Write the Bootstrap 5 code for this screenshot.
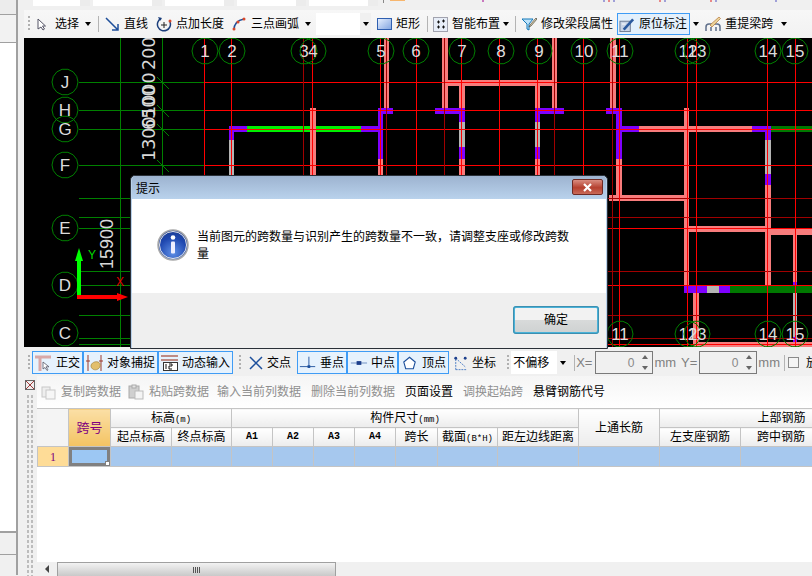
<!DOCTYPE html>
<html lang="zh-CN">
<head>
    <meta charset="UTF-8">
    <title>原位标注</title>
    <link href="https://cdn.jsdelivr.net/npm/bootstrap@5.3.3/dist/css/bootstrap.min.css" rel="stylesheet">
    <style>
        html, body { width: 812px; height: 576px; overflow: hidden; margin: 0; }
        body {
            background: #f0f0f0; color: #000;
            font-family: "Liberation Sans", "Noto Sans CJK SC", sans-serif;
            font-size: 12px; line-height: 1;
        }
        svg { display: block; flex: none; }
        .app-shell { width: 812px; height: 576px; position: relative; }
        .main-col { min-width: 0; }

        /* spacing steps the toolbars need, Bootstrap's scale is too coarse here */
        .gl-1 { margin-left: 1px; } .gl-2 { margin-left: 2px; } .gl-3 { margin-left: 3px; } .gl-4 { margin-left: 4px; }
        .gl-5 { margin-left: 5px; } .gl-6 { margin-left: 6px; } .gl-7 { margin-left: 7px; }
        .gl-8 { margin-left: 8px; } .gl-10 { margin-left: 10px; }

        /* left rail */
        .rail { width: 24px; flex: none; }
        .rail-box { width: 18px; border-right: 2px solid #a0a0a0; }
        .rail-a { height: 15px; background: #ececec; border-bottom: 1px solid #a0a0a0; }
        .rail-b { height: 28px; background: #f2f2f2; border-bottom: 1px solid #a0a0a0; }
        .rail-c { height: 490px; background: #fff; border-bottom: 2px solid #a0a0a0; }
        .rail-d { height: 22px; background: #f0f0f0; border-bottom: 1px solid #a0a0a0; }
        .rail-e { height: 20px; background: #f0f0f0; }

        /* top strip */
        .top-strip { height: 6px; padding-left: 9px; position: relative; }
        .strip-input { width: 69px; height: 6px; margin-right: 3px; background: #fff; border-right: 10px solid #ececec; flex: none; }
        .strip-first { width: 57px; }
        .strip-orange { width: 15px; height: 1px; background: #f7b66e; margin-left: 6px; }
        .strip-sep { width: 1px; height: 3px; background: #888; margin-left: 2px; }
        .strip-ticks { position: absolute; left: 456px; top: 0; }

        /* toolbars */
        .bar-main { height: 28px; padding-left: 4px; margin-top: 4px; background: linear-gradient(#f7f7f7, #f2f2f2); }
        .grip { width: 2px; height: 16px; margin-right: 7px; flex: none;
            background-image: linear-gradient(#b0b0b0 50%, transparent 50%); background-size: 2px 4px; }
        .tool { display: flex; align-items: center; gap: 4px; height: 22px; white-space: nowrap; flex: none; }
        .tool-on { background: #e3f0fc; border: 1px solid #3f9cf5; padding: 0 2px 0 1px; }
        .caret-mini { width: 0; height: 0; border: 3px solid transparent; border-top: 4px solid #000; border-bottom: 0; flex: none; }
        .bar-sep { width: 1px; height: 16px; background: #b4b4b4; flex: none; }
        .blank-select { width: 55px; height: 22px; background: #fff; position: relative; flex: none; }
        .blank-side { position: absolute; right: 0; top: 0; bottom: 0; width: 11px; background: #f0f0f0;
            display: flex; align-items: center; justify-content: center; }

        /* canvas */
        .cad-canvas { height: 309px; background: #000; }

        /* snap bar */
        .bar-snap { height: 29px; padding: 4px 0 2px 4px; }
        .bar-snap .grip { margin-right: 0; }
        .snap-btn { display: flex; align-items: center; gap: 3px; height: 23px; background: #e6f2fd;
            border: 1px solid #3f9cf5; padding: 0 2px 0 1px; flex: none; white-space: nowrap; }
        .snap-plain { background: transparent; border-color: transparent; }
        .offset-select { width: 57px; height: 23px; background: #fff; position: relative; padding: 6px 0 0 2px; flex: none; font-size: 12px; }
        .spin-box { width: 58px; height: 23px; border: 1px solid #7a7a7a; background: #f0f0f0; position: relative;
            text-align: right; padding: 5px 18px 0 0; color: #888; flex: none; font-size: 12px; }
        .spin-up, .spin-dn { position: absolute; right: 4px; width: 0; height: 0; border: 3px solid transparent; }
        .spin-up { top: 3px; border-bottom: 4px solid #666; border-top: 0; }
        .spin-dn { bottom: 3px; border-top: 4px solid #666; border-bottom: 0; }
        .unit-text { color: #808080; font-size: 13px; white-space: nowrap; flex: none; }
        .check-box { width: 11px; height: 11px; border: 1px solid #8a8a8a; background: #f4f4f4; flex: none; }

        /* lower panel */
        .lower-panel { flex: 1; min-height: 0; position: relative; }
        .dot-rail { width: 13px; flex: none; position: relative; background-color: #f0f0f0; }
        .dot-rail::before { content: ""; position: absolute; left: 2px; width: 8px; top: 18px; bottom: 0;
            background-image: radial-gradient(#bcbcbc 1px, transparent 1px); background-size: 4px 5px; }
        .panel-close { position: absolute; left: 1px; top: 4px; width: 10px; height: 10px; background: #e8e8e8; }
        .panel-body { flex: 1; min-width: 0; background: #fff; display: flex; flex-direction: column; }
        .bar-grid { height: 32px; padding-left: 4px; background: linear-gradient(#f5f5f5, #fff); flex: none; }
        .bar-grid .tool { gap: 5px; }
        .off-text { color: #8f8f8f; }
        .grid-wrap { flex: 1; overflow: hidden; background: #fff; }

        .span-grid { table-layout: fixed; width: 866px; border-collapse: collapse; margin: 0; }
        .span-grid th, .span-grid td {
            border: 1px solid #c4c4c4; padding: 0; text-align: center; vertical-align: middle;
            font-weight: 400; font-size: 12px; overflow: hidden; white-space: nowrap;
        }
        .span-grid th { background: linear-gradient(#fff, #ececec); height: 19px; }
        .span-grid .corner-head { background: #f4f4f4; border-left-color: #f4f4f4; }
        .span-grid .key-head { background: linear-gradient(#fbdfa6, #f3c362); color: #800080; font-size: 13px; }
        .span-grid td { height: 20px; background: #a6c8ee; }
        .span-grid .row-no { background: #fedc97; color: #800080; font-family: "Liberation Serif", serif; }
        .span-grid .active-cell { background: #9cc7f3; box-shadow: inset 0 0 0 3px #808080; position: relative; }
        .latin-head { font-family: "Liberation Mono", monospace; font-size: 10px !important; font-weight: 700 !important; }
        .mini-latin { font-family: "Liberation Mono", monospace; font-size: 9px; }
        .fill-handle { position: absolute; right: 0; bottom: 0; width: 5px; height: 5px; background: #fff; border: 1px solid #808080; }

        .h-scroll { height: 14px; flex: none; background: #f0f0f0; padding-left: 4px; }
        .h-arrow { width: 0; height: 0; border: 4px solid transparent; border-right: 4px solid #444; border-left: 0; margin: 0 8px 0 4px; flex: none; }
        .h-thumb { width: 279px; height: 14px; border: 1px solid #a0a0a0; border-bottom: 0;
            background: linear-gradient(#f2f2f2, #c9c9c9); display: flex; align-items: center; justify-content: center; gap: 1px; flex: none; }
        .h-thumb span { width: 1px; height: 6px; background: #555; }

        /* message box */
        .msg-box { position: absolute; left: 130px; top: 175px; width: 478px; height: 174px;
            border: 1px solid #2a3038; border-radius: 5px 5px 0 0; background: #b9d1ea; padding: 0 1px 1px 1px; }
        .msg-title { height: 23px; background: linear-gradient(#9db3d0, #b9d2ec); padding: 3px 3px 0 4px; border-radius: 4px 4px 0 0; font-size: 12px; }
        .msg-x { width: 31px; height: 16px; background: linear-gradient(#d98c80, #b5402f 55%, #c96a58); border: 1px solid #6e2a24; border-radius: 2px;
            display: flex; align-items: center; justify-content: center; }
        .msg-main { height: 94px; background: #fff; padding: 30px 30px 0 25px; gap: 8px; }
        .msg-text { line-height: 17px; font-size: 12px; width: 384px; }
        .msg-foot { height: 55px; background: #efefef; padding: 13px 7px 0 0; }
        .ok-btn { width: 86px; height: 28px; border: 2px solid #4ab2d8; border-radius: 3px; font-size: 12px; padding: 0; color: #000;
            background: linear-gradient(#f2f2f2 50%, #d8dada 50%, #cfd2d2); outline: 1px solid #3d8fb0; outline-offset: -1px; }
    </style>
</head>

<body>
<div class="app-shell d-flex">

    <div class="rail">
        <div class="rail-box rail-a"></div>
        <div class="rail-box rail-b"></div>
        <div class="rail-box rail-c"></div>
        <div class="rail-box rail-d"></div>
        <div class="rail-box rail-e"></div>
    </div>

    <div class="main-col flex-grow-1 d-flex flex-column">
        <div class="top-strip d-flex">
            <div class="strip-input strip-first"></div>
            <div class="strip-input"></div>
            <div class="strip-input"></div>
            <div class="strip-input"></div>
            <div class="strip-input"></div>
            <div class="strip-sep"></div>
            <div class="strip-orange"></div>
            <svg class="strip-ticks" width="300" height="2" viewBox="0 0 300 2"><path d="M3 0v2" stroke="#a0008c"/><path d="M124 0v2M134 0v2M185 0v2M236 0v2M296 0v2" stroke="#5050c0"/><path d="M129 0v2M180 0v2M231 0v2" stroke="#e02020"/></svg>
        </div>

        <!-- draw toolbar -->
        <div class="bar-main d-flex align-items-center">
            <div class="grip"></div>
            <div class="tool"><svg width="10" height="13" viewBox="0 0 10 13"><path d="M1 1v10l3-2 2 3 1.500-1-2-3h3z" fill="#fff" stroke="#556"/></svg><span class="gl-4">选择</span></div>
            <div class="caret-mini gl-6"></div>
            <div class="bar-sep gl-7"></div>
            <div class="tool gl-6"><svg width="15" height="15" viewBox="0 0 15 15"><path d="M1 1l12 12M13 7v6H7" fill="none" stroke="#1f4f9a" stroke-width="1.500"/></svg><span>直线</span></div>
            <div class="tool gl-8"><svg width="16" height="16" viewBox="0 0 16 16"><path d="M14 6a6.500 6.500 0 1 1-9-3.500" fill="none" stroke="#1c3f7c" stroke-width="1.500"/><path d="M2 1l4 1-2 3z" fill="#1c3f7c"/><path d="M5 9h6M8 6v6" stroke="#222"/><circle cx="14" cy="5" r="1.500" fill="#d9482b"/></svg><span>点加长度</span></div>
            <div class="tool gl-8"><svg width="14" height="14" viewBox="0 0 14 14"><path d="M2 13C2 7 6 3 12 2" fill="none" stroke="#1f4f9a" stroke-width="1.500"/><circle cx="2" cy="12" r="1.500" fill="#d9482b"/><circle cx="6" cy="5" r="1.500" fill="#d9482b"/><circle cx="12" cy="2" r="1.500" fill="#d9482b"/></svg><span class="gl-1">三点画弧</span></div>
            <div class="caret-mini gl-6"></div>
            <div class="blank-select gl-5"><div class="blank-side"><div class="caret-mini"></div></div></div>
            <div class="tool gl-6"><svg width="15" height="12" viewBox="0 0 15 12"><defs><linearGradient id="rectFill" x1="0" y1="0" x2="1" y2="1"><stop offset="0" stop-color="#eaf2ff"/><stop offset="1" stop-color="#7fa3e0"/></linearGradient></defs><rect x=".5" y=".5" width="14" height="11" fill="url(#rectFill)" stroke="#2f5fb0"/></svg><span>矩形</span></div>
            <div class="bar-sep gl-7"></div>
            <div class="tool gl-5"><svg width="15" height="15" viewBox="0 0 15 15"><rect x=".5" y=".5" width="14" height="14" fill="#e8eef8" stroke="#556" stroke-dasharray="1 1"/><path d="M4 5h3M5.500 3.500v3M9 4h3M10.500 2.500v3M4 10h3M5.500 8.500v3M9 10h3M10.500 8.500v3" stroke="#111"/></svg><span>智能布置</span></div>
            <div class="caret-mini gl-3"></div>
            <div class="bar-sep gl-6"></div>
            <div class="tool gl-5"><svg width="16" height="15" viewBox="0 0 16 15"><path d="M1 2h11L8 7v6l-2-1V7z" fill="#bfe4fb" stroke="#1578b8"/><path d="M15 1l-6 7-1 2 2-1 6-7z" fill="#e9d9a8" stroke="#444" stroke-width=".7"/></svg><span>修改梁段属性</span></div>
            <div class="tool tool-on gl-4"><svg width="16" height="17" viewBox="0 0 17 17"><rect x="1" y="5" width="11" height="11" fill="#c9d4e6" stroke="#6a7890"/><path d="M4 13L14 2l2 2L6 15z" fill="#2c5a9e"/><path d="M3 8h4" stroke="#fff"/></svg><span>原位标注</span></div>
            <div class="caret-mini gl-3"></div>
            <div class="tool gl-6"><svg width="16" height="16" viewBox="0 0 16 16"><path d="M1 15v-4c0-2 1-3 3-3h8c2 0 3 1 3 3v4M6 15v-4M11 15v-4" fill="none" stroke="#5f6f8a" stroke-width="1.500"/><path d="M5 9L14 1l1.500 1.500L7 11z" fill="#ead39a" stroke="#b6763a" stroke-width=".7"/></svg><span>重提梁跨</span></div>
            <div class="caret-mini gl-8"></div>
        </div>

        <!-- drawing area -->
        <div class="cad-canvas">
            <svg id="cad" width="788" height="309" viewBox="24 38 788 309"></svg>
        </div>

        <!-- snap toolbar -->
        <div class="bar-snap d-flex align-items-center">
            <div class="grip"></div>
            <div class="snap-btn gl-2"><svg width="19" height="18" viewBox="0 0 19 18"><path d="M1 3h16M6 3v14" stroke="#d9a8a8" stroke-width="3"/><path d="M9 8v7l2-1.500 2 3 1-.7-2-3h3z" fill="#fff" stroke="#556" stroke-width=".8"/></svg><span>正交</span></div>
            <div class="snap-btn"><svg width="19" height="18" viewBox="0 0 19 18"><path d="M3 1v16M16 1v16" stroke="#9b3a2e"/><path d="M1 7h4M14 7h4" stroke="#9b3a2e"/><path d="M6 12c0-3 4-5 7-4s3 5 0 7-7 0-7-3z" fill="#e2bf6c" stroke="#a5853f" stroke-width=".7"/></svg><span>对象捕捉</span></div>
            <div class="snap-btn"><svg width="19" height="18" viewBox="0 0 19 18"><path d="M1 2h17M1 6h17" stroke="#b0685c" stroke-width="1.500"/><rect x="3.500" y="8.500" width="14" height="8" fill="#fff" stroke="#333"/><path d="M6 10v5M9 10h3v2h-3v3h3" stroke="#111" fill="none"/></svg><span>动态输入</span></div>
            <div class="grip gl-6"></div>
            <div class="snap-btn snap-plain gl-5"><svg width="16" height="16" viewBox="0 0 16 16"><path d="M2 2l12 12M14 2L2 14" stroke="#1c4f9c" stroke-width="1.500"/></svg><span>交点</span></div>
            <div class="snap-btn gl-3"><svg width="18" height="16" viewBox="0 0 20 16"><path d="M1 12h17M11 1v11" stroke="#1c4f9c"/><rect x="9.500" y="10.500" width="3" height="3" fill="#1c4f9c"/></svg><span>垂点</span></div>
            <div class="snap-btn"><svg width="19" height="16" viewBox="0 0 20 16"><path d="M2 8h17" stroke="#6b8ec2"/><rect x="8" y="6" width="5" height="4" fill="#1c3f8c"/></svg><span>中点</span></div>
            <div class="snap-btn"><svg width="19" height="16" viewBox="0 0 20 16"><path d="M10 2l6 5-2 7H6L4 7z" fill="#fff" stroke="#1c4f9c" stroke-width="1.200"/></svg><span>顶点</span></div>
            <div class="snap-btn snap-plain"><svg width="18" height="16" viewBox="0 0 19 16"><path d="M5 15V3M5 15h12M5 3l10 9" stroke="#4a7cc4" stroke-dasharray="2 1" fill="none"/><circle cx="5" cy="3" r="1.500" fill="#1c3f8c"/><circle cx="15" cy="3" r="1.500" fill="#1c3f8c"/></svg><span>坐标</span></div>
            <div class="grip gl-8"></div>
            <div class="offset-select gl-2">不偏移<div class="blank-side"><div class="caret-mini"></div></div></div>
            <div class="bar-sep gl-6"></div>
            <span class="unit-text gl-1">X=</span>
            <div class="spin-box gl-3">0<span class="spin-up"></span><span class="spin-dn"></span></div>
            <span class="unit-text gl-1">mm</span><span class="unit-text gl-5">Y=</span>
            <div class="spin-box gl-2">0<span class="spin-up"></span><span class="spin-dn"></span></div>
            <span class="unit-text gl-1">mm</span>
            <div class="bar-sep gl-4"></div>
            <div class="check-box gl-3"></div>
            <span class="gl-7">放</span>
        </div>

        <!-- span table panel -->
        <div class="lower-panel d-flex">
            <div class="dot-rail">
                <div class="panel-close"><svg width="10" height="10" viewBox="0 0 10 10"><rect x=".5" y=".5" width="9" height="9" fill="#eee" stroke="#666"/><path d="M1 1l8 8M9 1L1 9" stroke="#a03a3a"/></svg></div>
            </div>
            <div class="panel-body">
                <div class="bar-grid d-flex align-items-center">
                    <div class="tool off-text"><svg width="15" height="15" viewBox="0 0 15 15"><rect x="1" y="2" width="8" height="10" fill="#eee" stroke="#c8c8c8"/><rect x="5" y="5" width="9" height="9" fill="#f6f6f6" stroke="#c8c8c8"/></svg><span>复制跨数据</span></div>
                    <div class="tool off-text gl-7"><svg width="16" height="16" viewBox="0 0 16 16"><rect x="1" y="2" width="10" height="12" fill="#cfcfcf" stroke="#aaa"/><rect x="4" y="1" width="4" height="3" fill="#e4e4e4" stroke="#aaa"/><rect x="7" y="7" width="8" height="8" fill="#f4f4f4" stroke="#bbb"/></svg><span>粘贴跨数据</span></div>
                    <span class="off-text gl-8">输入当前列数据</span>
                    <span class="off-text gl-10">删除当前列数据</span>
                    <span class="gl-10">页面设置</span>
                    <span class="off-text gl-10">调换起始跨</span>
                    <span class="gl-10">悬臂钢筋代号</span>
                </div>
                <div class="grid-wrap">
                    <table class="span-grid">
                        <colgroup>
                            <col style="width:31px"><col style="width:42px"><col style="width:61px"><col style="width:60px">
                            <col style="width:41px"><col style="width:41px"><col style="width:41px"><col style="width:41px">
                            <col style="width:42px"><col style="width:60px"><col style="width:81px"><col style="width:81px">
                            <col style="width:81px"><col style="width:81px"><col style="width:82px">
                        </colgroup>
                        <thead>
                            <tr>
                                <th rowspan="2" class="corner-head"></th>
                                <th rowspan="2" class="key-head">跨号</th>
                                <th colspan="2">标高<span class="mini-latin">(m)</span></th>
                                <th colspan="7">构件尺寸<span class="mini-latin">(mm)</span></th>
                                <th rowspan="2">上通长筋</th>
                                <th colspan="3">上部钢筋</th>
                            </tr>
                            <tr>
                                <th>起点标高</th><th>终点标高</th>
                                <th class="latin-head">A1</th><th class="latin-head">A2</th><th class="latin-head">A3</th><th class="latin-head">A4</th>
                                <th>跨长</th><th>截面<span class="mini-latin">(B*H)</span></th><th>距左边线距离</th>
                                <th>左支座钢筋</th><th>跨中钢筋</th><th></th>
                            </tr>
                        </thead>
                        <tbody>
                            <tr>
                                <td class="row-no">1</td>
                                <td class="active-cell"><span class="fill-handle"></span></td>
                                <td></td><td></td><td></td><td></td><td></td><td></td><td></td><td></td><td></td><td></td><td></td><td></td><td></td>
                            </tr>
                        </tbody>
                    </table>
                </div>
                <div class="h-scroll d-flex align-items-center">
                    <div class="h-arrow"></div>
                    <div class="h-thumb"><span></span><span></span><span></span><span></span></div>
                </div>
            </div>
        </div>
    </div>

    <!-- message box -->
    <div class="msg-box">
        <div class="msg-title d-flex justify-content-between">
            <span class="pt-1">提示</span>
            <div class="msg-x"><svg width="11" height="9" viewBox="0 0 11 9"><path d="M2 1l7 7M9 1L2 8" stroke="#fff" stroke-width="2.200"/></svg></div>
        </div>
        <div class="msg-main d-flex">
            <svg width="32" height="32" viewBox="0 0 32 32">
                <defs><radialGradient id="infoFill" cx=".5" cy=".75" r=".8"><stop offset="0" stop-color="#5f8fe6"/><stop offset=".6" stop-color="#1f48b0"/><stop offset="1" stop-color="#1a3a8c"/></radialGradient></defs>
                <circle cx="16" cy="16" r="15" fill="url(#infoFill)" stroke="#a9a9a9" stroke-width="1.500"/>
                <circle cx="16" cy="16" r="13.500" fill="none" stroke="#e6e6e6"/>
                <circle cx="16" cy="8.500" r="2.300" fill="#fff"/>
                <rect x="14" y="12.500" width="4" height="12" rx="1" fill="#eef"/>
            </svg>
            <div class="msg-text">当前图元的跨数量与识别产生的跨数量不一致，请调整支座或修改跨数量</div>
        </div>
        <div class="msg-foot d-flex justify-content-end">
            <button type="button" class="ok-btn">确定</button>
        </div>
    </div>
</div>

<script src="https://cdn.jsdelivr.net/npm/bootstrap@5.3.3/dist/js/bootstrap.bundle.min.js"></script>
<script>
    const RED = '#ff0000', DARK = '#a00000', GREEN = '#008000', PINK = '#f77c7c', PURPLE = '#7f00ff', GRAY = '#b4b4b4', LIME = '#00ee00', MOSS = '#007800';
    const cad = document.getElementById('cad');
    let out = '';

    // beams: x, y, w, h, colour
    const beams = [
        [229,126,18,6,PURPLE],[247,126,114,6,LIME],[361,126,19,6,PURPLE],[229,126,5,14,PURPLE],[229,140,5,35,GRAY],
        [310,108,6,67,PINK],[384,38,5,70,PINK],[378,108,15,6,PURPLE],[378,108,5,51,PURPLE],[378,159,5,60,PINK],
        [442,38,6,70,PINK],[552,38,5,70,PINK],[442,80,115,6,PINK],[459,80,6,28,PINK],[535,80,5,28,PINK],
        [435,108,30,6,PURPLE],[459,108,6,14,PURPLE],[459,122,6,25,GRAY],[459,147,6,12,PURPLE],[459,159,6,60,PINK],
        [535,108,29,6,PURPLE],[535,108,5,14,PURPLE],[535,122,5,25,GRAY],[535,147,5,12,PURPLE],[535,159,5,60,PINK],
        [610,38,6,70,PINK],[606,108,16,6,PURPLE],[616,108,6,51,PURPLE],[616,159,6,36,PINK],[609,195,75,6,PINK],
        [622,126,17,6,PURPLE],[639,126,113,6,PINK],[752,126,19,6,PURPLE],[771,126,41,6,MOSS],
        [684,108,5,180,PINK],[765,132,6,8,PURPLE],[765,140,6,34,GRAY],[765,174,6,11,PURPLE],[765,185,6,103,PINK],
        [684,226,87,6,PINK],[771,229,41,6,PINK],[793,235,4,47,PINK],[793,282,4,11,PURPLE],[793,293,4,44,GRAY],[793,337,4,8,PURPLE],
        [693,293,6,50,PINK],[693,342,119,5,PINK],
        [684,285,23,8,PURPLE],[707,285,12,8,GRAY],[719,285,11,8,PURPLE],[730,285,82,8,MOSS]
    ];
    beams.forEach(b => { out += `<rect x="${b[0]}" y="${b[1]}" width="${b[2]}" height="${b[3]}" fill="${b[4]}"/>`; });

    // axis lines
    const rows = [[82,RED],[110,RED],[129,RED],[165,RED],[198,DARK],[217,DARK],[228,RED],[271,DARK],[285,RED],[315,DARK],[338,DARK],[344,RED]];
    rows.forEach(r => {
        out += `<path d="M79 ${r[0]+.5}H204" stroke="${GREEN}"/><path d="M204 ${r[0]+.5}H812" stroke="${r[1]}"/>`;
    });
    const cols = [[204,RED],[231,RED],[303,DARK],[312,RED],[380,RED],[386,DARK],[416,RED],[444,DARK],[461,RED],[499,RED],[537,RED],[554,DARK],[583,RED],[612,DARK],[619,RED],[687,RED],[696,RED],[767,RED],[795,RED]];
    cols.forEach(c => { out += `<path d="M${c[0]+.5} 38V347" stroke="${c[1]}"/>`; });
    out += `<path d="M120.500 38V347M162.500 38V180" stroke="${GREEN}"/>`;
    [82,110,129,165].forEach(y => { out += `<path d="M157 ${y-5}L169 ${y+7}" stroke="${GREEN}"/>`; });

    // axis bubbles
    function bubble(x, y, label) {
        const r = 13, pts = [];
        for (let i = 0; i < 14; i++) {
            const a = i / 14 * Math.PI * 2;
            pts.push((x + r * Math.cos(a)).toFixed(1) + ',' + (y + r * Math.sin(a)).toFixed(1));
        }
        out += `<polygon points="${pts.join(' ')}" fill="none" stroke="${GREEN}"/>`;
        if (label) out += `<text x="${x}" y="${y + 6}" text-anchor="middle" font-size="17" fill="#dcdcdc" font-family="Liberation Sans, sans-serif">${label}</text>`;
    }
    [['1',205],['2',232],['3',304],['4',313],['5',381],['6',416],['7',462],['8',501],['9',539],['10',584],['11',620],['12',688],['13',697],['14',768],['15',795],['',826]]
        .forEach(t => bubble(t[1], 51, t[0]));
    [['J',82],['H',110],['G',129],['F',165],['E',228],['D',285],['C',333]].forEach(t => bubble(65, t[1], t[0]));
    [['11',620],['12',688],['13',697],['14',768],['15',795]].forEach(t => bubble(t[1], 334, t[0]));

    // dimension text
    [[155,161,'1300'],[155,130,'6500'],[155,117,'1000'],[155,70,'2000']].forEach(d => {
        out += `<text transform="translate(${d[0]} ${d[1]}) rotate(-90)" font-size="17.500" fill="#d8d8d8" font-family="DejaVu Sans, sans-serif">${d[2]}</text>`;
    });
    out += `<text transform="translate(113 269) rotate(-90)" font-size="18" fill="#d8d8d8" font-family="Liberation Sans, sans-serif">15900</text>`;

    // ucs arrows
    out += `<path d="M79 297V256" stroke="#00ff00" stroke-width="4"/><path d="M79 248l-4 13h8z" fill="#00ff00"/>`;
    out += `<path d="M77 297H120" stroke="#ff0000" stroke-width="4"/><path d="M128 297l-11-4v8z" fill="#ff0000"/>`;
    out += `<text x="88" y="259" font-size="12" fill="#00dd00" font-family="Liberation Sans, sans-serif">Y</text>`;
    out += `<text x="116" y="286" font-size="12" fill="#e00000" font-family="Liberation Sans, sans-serif">X</text>`;

    cad.innerHTML = out;
</script>
</body>
</html>
